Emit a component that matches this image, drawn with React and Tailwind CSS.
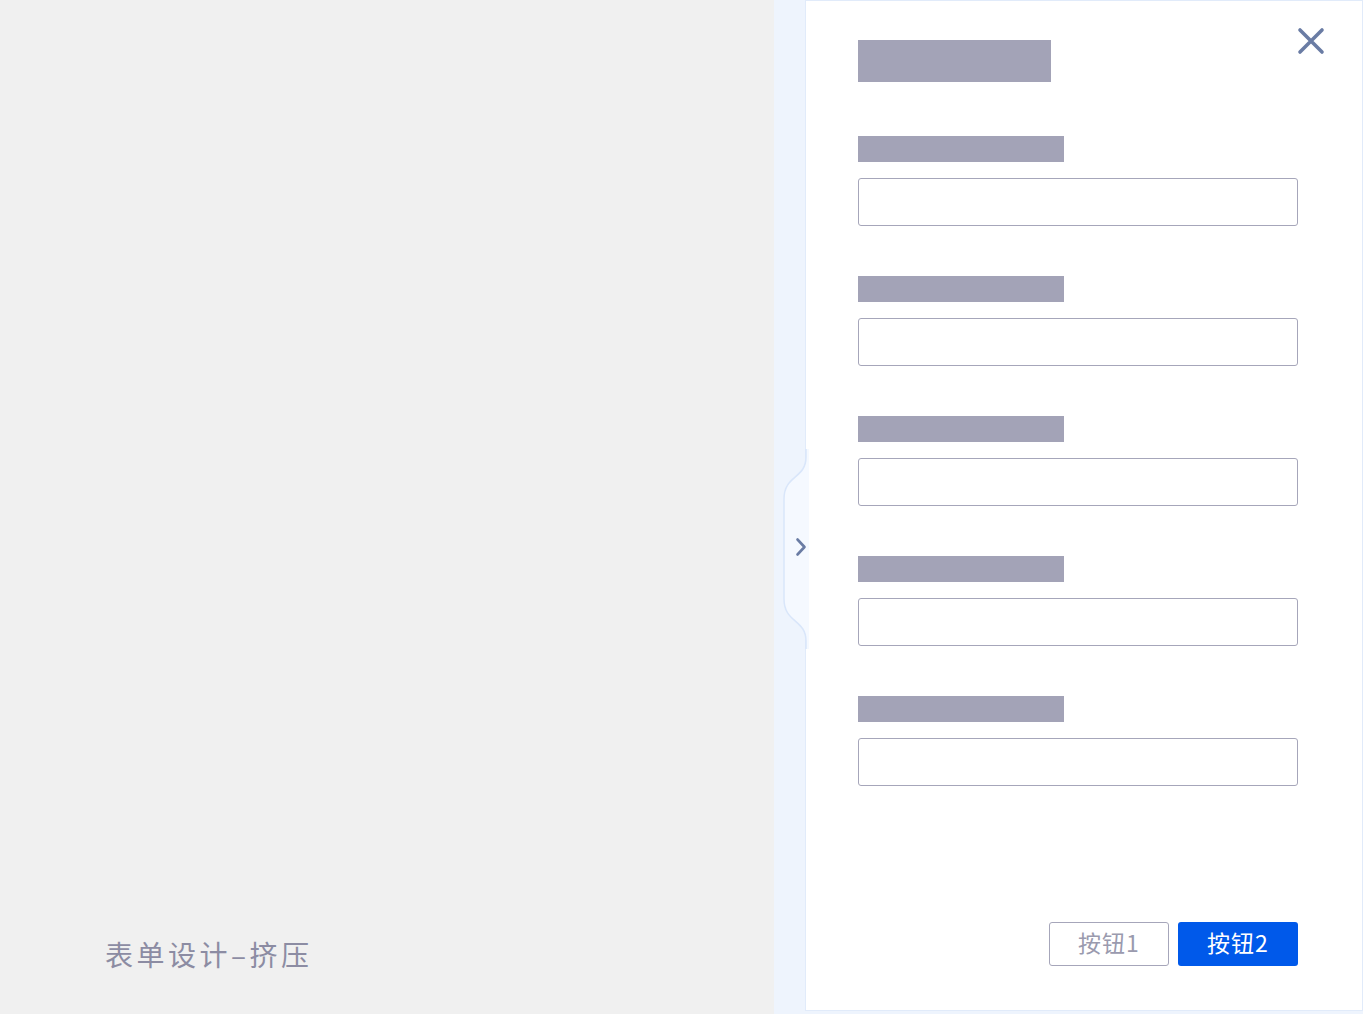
import React from 'react';

const fields = [1, 2, 3, 4, 5];

function CloseIcon() {
  return (
    <svg width="28" height="28" viewBox="0 0 28 28" fill="none">
      <path d="M3 3L25 25M25 3L3 25" stroke="#6a7ca4" strokeWidth="3.6" strokeLinecap="round" />
    </svg>
  );
}

function CollapseTab() {
  return (
    <div className="absolute left-[-23px] top-[448px] w-[26px] h-[200px]">
      <svg width="26" height="200" viewBox="0 0 26 200" fill="none">
        <path d="M23 0 V8 C23 30 1 26 1 50 V150 C1 174 23 170 23 192 V200 H26 V0 Z" fill="#f5f9ff" />
        <path d="M23 0 V8 C23 30 1 26 1 50 V150 C1 174 23 170 23 192 V200" stroke="#d9e6fa" strokeWidth="1.5" />
        <path d="M14.5 90.5 L21.5 98 L14.5 105.5" stroke="#6a7ca4" strokeWidth="2.6" strokeLinecap="round" strokeLinejoin="round" />
      </svg>
    </div>
  );
}

export default function App() {
  return (
    <div className="flex w-[1363px] h-[1014px] overflow-hidden" style={{ fontFamily: '"Noto Sans CJK SC", "Noto Sans", sans-serif' }}>
      <div className="w-[774px] h-full bg-[#f0f0f0] flex flex-col justify-end pl-[105px] pb-[46px]">
        <p className="text-[28px] leading-none tracking-[3.5px] text-[#8c8ca3]">表单设计–挤压</p>
      </div>

      <div className="flex-1 h-full bg-[#eef4fd] pl-[31px]">
        <div className="relative w-[558px] h-[1011px] bg-white border border-[#e1ebfa] flex flex-col pl-[52px] pr-[63px] pt-[39px]">
          <CollapseTab />
          <button className="absolute right-[37px] top-[26px]">
            <CloseIcon />
          </button>

          <div className="w-[193px] h-[42px] bg-[#a3a3b7]" />

          <div className="mt-[54px] flex flex-col gap-[50px]">
            {fields.map((f) => (
              <div key={f} className="flex flex-col gap-[16px]">
                <div className="w-[206px] h-[26px] bg-[#a3a3b7]" />
                <div className="w-[440px] h-[48px] rounded-[3px] border border-[#a6a6ba] bg-white" />
              </div>
            ))}
          </div>

          <div className="mt-auto mb-[44px] flex justify-end gap-[9px] w-[440px]">
            <button className="w-[120px] h-[44px] pb-[3px] rounded-[3px] border border-[#a6a6ba] bg-white text-[23px] leading-none tracking-[1px] text-[#9a9aae]">
              按钮1
            </button>
            <button className="w-[120px] h-[44px] pb-[3px] rounded-[3px] bg-[#0059ea] text-[23px] leading-none tracking-[1px] text-white">
              按钮2
            </button>
          </div>
        </div>
      </div>
    </div>
  );
}
